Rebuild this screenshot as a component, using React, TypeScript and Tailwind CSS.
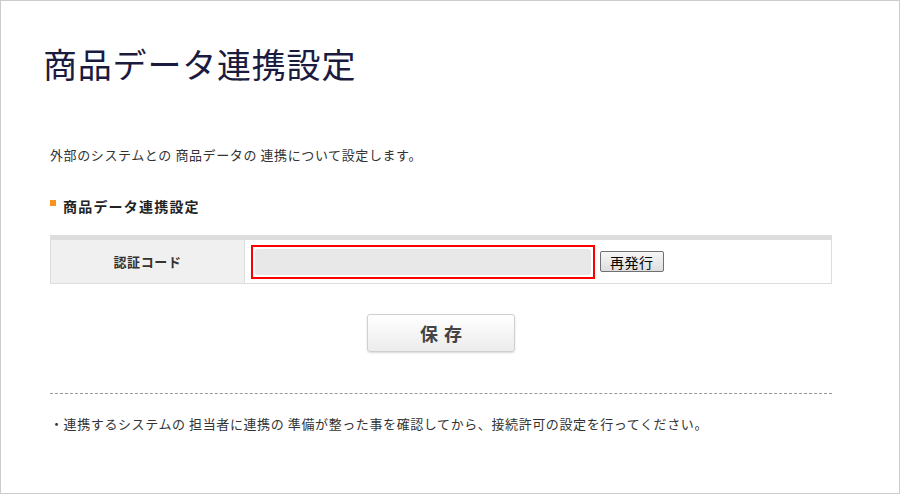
export default function App() {
  const font = { fontFamily: '"Noto Sans CJK JP", "Noto Sans", sans-serif' }
  return (
    <div className="w-[900px] h-[494px] border border-[#cccccc] bg-white overflow-hidden" style={font}>
      <div className="pl-[49px]">
        {/* Page title */}
        <h1 className="mt-[43px] ml-[-7px] text-[34px] leading-[40px] font-normal text-[#1b1b3f] tracking-[0.8px]">商品データ連携設定</h1>

        <p className="mt-[61px] text-[13px] leading-[20px] text-[#333333] tracking-[0.6px]">
          外部のシステムとの 商品データの 連携について設定します。
        </p>

        {/* Section heading */}
        <div className="mt-[31px] flex items-center gap-[7px] h-[20px]">
          <span className="block w-[6px] h-[6px] bg-[#f7931e] mt-[-7px]" />
          <h2 className="text-[14px] leading-[20px] font-bold text-[#222222] tracking-[1.2px]">商品データ連携設定</h2>
        </div>

        {/* Settings table */}
        <div className="mt-[19px] w-[782px] border-t-[5px] border-[#dddddd]">
          <div className="flex h-[44px] border-l border-r border-b border-[#dddddd]">
            <div className="w-[194px] shrink-0 bg-[#f0f0f0] border-r border-[#dddddd] flex items-center justify-center text-[13px] font-bold text-[#333333] tracking-[0.6px]">
              認証コード
            </div>
            <div className="flex items-center pl-[6px]">
              <div className="w-[344px] h-[34px] border-2 border-[#ff0000] p-[2px]">
                <input
                  type="text"
                  className="block w-full h-full bg-[#e8e8e8] rounded-[3px] outline-none px-2 text-[13px]"
                  readOnly
                />
              </div>
              <button className="ml-[5px] h-[21px] px-[9px] border border-[#707070] rounded-[2px] bg-gradient-to-b from-[#f6f6f6] to-[#dedede] text-[14px] leading-[18px] text-black tracking-[0.5px]">
                再発行
              </button>
            </div>
          </div>
        </div>

        {/* Save */}
        <div className="mt-[30px] w-[782px] flex justify-center">
          <button className="w-[148px] h-[38px] rounded-[3px] border border-[#cfcfcf] bg-gradient-to-b from-[#ffffff] to-[#ececec] shadow-[0_1px_2px_rgba(0,0,0,0.15)] text-[18px] font-bold text-[#444444] tracking-[6px] pl-[6px]">
            保存
          </button>
        </div>

        <div className="mt-[41px] w-[782px] border-t border-dashed border-[#999999]" />

        <p className="mt-[20px] text-[13px] leading-[20px] text-[#333333] tracking-[0.6px]">
          ・連携するシステムの 担当者に連携の 準備が整った事を確認してから、接続許可の設定を行ってください。
        </p>
      </div>
    </div>
  )
}
